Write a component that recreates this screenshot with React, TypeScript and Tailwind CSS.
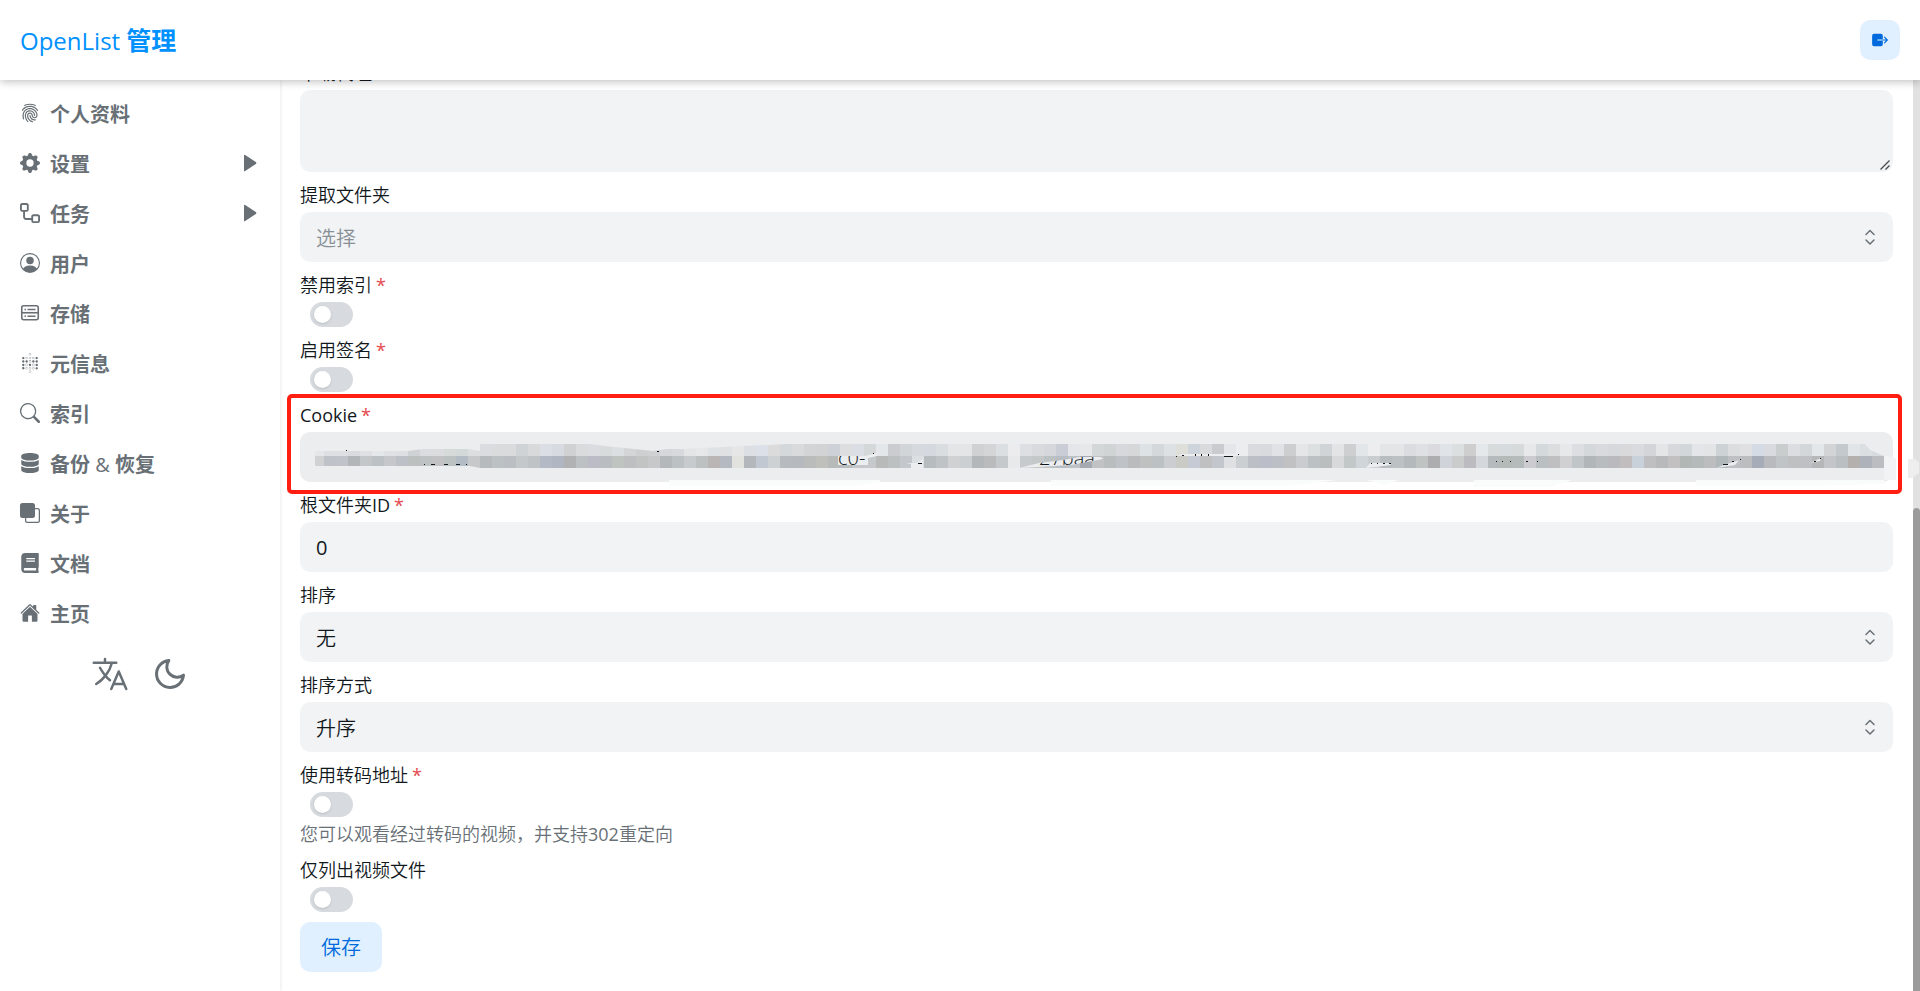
import React from 'react';
import type { IconType } from 'react-icons';
import { BsGearFill, BsPersonCircle, BsSearch, BsFront } from 'react-icons/bs';
import { FaDatabase, FaBook } from 'react-icons/fa';
import { FiMoon } from 'react-icons/fi';
import { IoExit, IoFingerPrint, IoHome, IoLanguageOutline } from 'react-icons/io5';
import { SiMetabase } from 'react-icons/si';

type IconProps = { className?: string };
type MenuItem = { title: string; icon: IconType | React.FC<IconProps>; children?: boolean };

function Workflow({ className }: IconProps) {
  return (
    <svg className={className} viewBox="0 0 16 16" fill="currentColor">
      <path d="M0 1.750C0 .784.784 0 1.750 0h3.500C6.216 0 7 .784 7 1.750v3.500A1.750 1.750 0 0 1 5.250 7H4v4a1 1 0 0 0 1 1h4v-1.250C9 9.784 9.784 9 10.750 9h3.500c.966 0 1.750.784 1.750 1.750v3.500A1.750 1.750 0 0 1 14.250 16h-3.500A1.750 1.750 0 0 1 9 14.250v-.750H5A2.500 2.500 0 0 1 2.500 11V7h-.750A1.750 1.750 0 0 1 0 5.250Zm1.750-.250a.250.250 0 0 0-.250.250v3.500c0 .138.112.250.250.250h3.500a.250.250 0 0 0 .250-.250v-3.500a.250.250 0 0 0-.250-.250Zm9 9a.250.250 0 0 0-.250.250v3.500c0 .138.112.250.250.250h3.500a.250.250 0 0 0 .250-.250v-3.500a.250.250 0 0 0-.250-.250Z" />
    </svg>
  );
}

function Storage({ className }: IconProps) {
  return (
    <svg className={className} viewBox="0 0 20 20" fill="none" stroke="currentColor" strokeWidth="1.600">
      <rect x="1.750" y="2.750" width="16.500" height="14" rx="2" />
      <path d="M2 9.750h16" />
      <path d="M4.500 6.500H6M7.500 6.500h8M4.500 13.300H6M7.500 13.300h8" strokeWidth="1.400" />
    </svg>
  );
}

const menu: MenuItem[] = [
  { title: '个人资料', icon: IoFingerPrint },
  { title: '设置', icon: BsGearFill, children: true },
  { title: '任务', icon: Workflow, children: true },
  { title: '用户', icon: BsPersonCircle },
  { title: '存储', icon: Storage },
  { title: '元信息', icon: SiMetabase },
  { title: '索引', icon: BsSearch },
  { title: '备份 & 恢复', icon: FaDatabase },
  { title: '关于', icon: BsFront },
  { title: '文档', icon: FaBook },
  { title: '主页', icon: IoHome },
];

// mask over the secret value, one colour per 12px cell
const maskTop =
  'e5e6e8 dedfe2 dedfe2 dadbde dfe0e3 e5e8eb dfe1e4 dddfe3 d0d3d5 dadcdf dadcde d6dad9 d3d8d8 dcdee0 dadcdf d9dbdd d9dbdd cfd3d5 d7d9da dcdee6 d7dae0 cfd1d3 d9dbdd dadce0 d8dbdc dbdfe1 d3d5d7 cdcfd1 d0d1d3 d5d7da d8d9dd ' +
  'e4e5e7 e6e7e9 dfe2e5 e0e1e3 e6e6e7 dcdfe4 dbe0e9 dcdbdc d5d8da d8dadb d2d4d6 d1d3d5 cfd1d8 dcdee0 dbdee4 d5d8d9 e4e7e9 cacccf d2d5d8 d6d9dd d5d9df dadde0 e4e5e7 e3e5e7 cfd1d3 d4d5d7 dcdfe2 ececee dddfe2 d8dadd d5d7dc cacdd5 e4e6e9 e6e8ea d3d7d8 d0d4d5 d6d8db d6d7d8 dde2e4 d5d8da ' +
  'dde1e3 dfdfda cdd4db d9dadc cacbce e5e6e9 ecedef dadbdf d9dade e0e2e6 cdced0 e4e6e8 dde0e1 d0d4d6 e2e4e6 cdcfd1 e2e6e9 ededef e3e5e7 e4e5e7 dadce0 dee0e4 dbdbdf e0e3e7 dcdfe0 cfcecf e5e8ea d7dbdc d6dbdd d6dadb e7e8ea d4d9dc dbdddf e7e8ea dcdee1 d5d8db d9dadd d6d8db d9d9dc dadbde ' +
  'd3d5d8 e4e5e7 d7d8db d2d7da e4e5e8 e3e4e6 cdd3d5 dcdddf e0e0e2 d5dbe4 d8dae0 cacdce dcdde1 d4d7da e4e7e9 d2d4d6 c3c9cc e1e5e7 dcdfe2 d7dade e8e9ea';
const maskBottom =
  'cfd1d3 bfc3c9 c0c3c9 b3b6b8 c4c7c9 bcc1c5 c6c7ca bdc0c7 bcc0bf bfc2c3 c2c2c4 bcc2c2 b3bbc4 c6c8ca b7babc bcc1c3 bbbfc3 c5c8ca bfc3c5 b4bac5 b0b6c2 b1b2b4 bdc1c3 bbbcc6 b9bdc1 c0c4c1 bdbfc1 c1c4c2 c6c8ca b5b8bb bcc1c3 ' +
  'c8cbcd bdc1c1 b9b6b5 b4b9c2 e2e2df b4b7bb c2c8d1 cdd1d4 b7babf b6b9be b9bcbb bfc0bb b6bab9 b9bdc0 c5c8ca c6c9cb b8bab9 bdc0c1 c4c7cb dcdfe2 b7bcbe bfc3c6 cfd1d3 cccfd1 b3b7b9 b9bbbc c6c9cb e8e9eb c6cacc c5c8c9 bcc1c3 b8bcc3 bdc2c6 a5a9b1 c0c2c3 babdbd bfc2c6 b9bbbc bec1c0 bcc1c3 ' +
  'cccdd1 cacbc5 c6cad4 c0c0c2 c4c6cd dfe0e2 cbcfd2 bcbfc6 bbbec8 bcbfc5 c1c0c3 cbcccf bcc1c3 babebe d7d9db c2c7c7 d0d5d9 c9cdd0 b8bdc0 bcc1c4 b4babc bfc3c1 adacae d0d4da c9cccb bcbbc0 d4d8dc b5babc b4bab7 b5babb ccccd0 bac0c1 bfbfc1 d0d0d2 c0c5c8 b1b7b9 b9bcbe b9b9be c1bdbf c8d0d9 ' +
  'bfbfc1 b8b9bb c2c0c1 b0b7b5 b4b9ba bbbdbf b1b8ba bfc0c3 bcbdbf a6adb8 b8babe c0c4c6 bfc0c2 bfc0c4 b6b7b8 c3c5c8 babfc1 b4b0ae aeb2bb bcbdc1 cbd1d3';

function Mosaic() {
  const rows = [maskTop.split(' '), maskBottom.split(' ')];
  return (
    <svg className="pointer-events-none absolute top-0 left-[15px] h-[56px] w-[1605px]" viewBox="0 0 1605 56" aria-hidden="true">
      <defs>
        <clipPath id="smudge">
          <path d="M0 19H93L108 17H153L165 19V12H275L290 14L338 19L352 17H368L472 12H1550L1555 18L1569 24V36H165L155 34H0Z" />
        </clipPath>
        <clipPath id="gapA"><path d="M523 24H553V33H523Z" /></clipPath>
        <clipPath id="gapB"><path d="M724 31L748 28L765 25H786L788 27L772 30L756 33H724Z" /></clipPath>
      </defs>
      <g clipPath="url(#smudge)" shapeRendering="crispEdges">
        {rows.map((row, r) =>
          row.map((c, i) => (
            <rect key={`${r}-${i}`} x={i === 0 ? 0 : i * 12 - 3} y={12 + r * 12} width={i === 0 ? 9 : 12} height={12} fill={`#${c}`} />
          ))
        )}
      </g>
      <g fill="#ecedef">
        <path d="M523 24H550L562 21V24L553 26V33H523Z" />
        <path d="M591 31H602L608 27V36H596V32Z" />
        <path d="M704 36L724 31L748 28L765 25H786L788 27L772 30L756 33Z" />
        <path d="M1401 36L1412 32L1425 28V27L1420 33Z" />
        <path d="M1495 31L1506 26L1505 29Z" />
        <path d="M862 24L868 22H921L928 22V24Z" />
        <path d="M1051 36L1055 31H1076V33L1060 35Z" />
      </g>
      <g fill="#11181c" fontSize="20">
        <text x="523" y="33" clipPath="url(#gapA)">c0-</text>
        <text x="724" y="33" clipPath="url(#gapB)">27baa</text>
      </g>
      <g fill="#11181c">
        <path d="M109 32h1v1h-1zM116 32h4v1h-4zM129 32h4v1h-4zM141 32h4v1h-4zM151 32h1v1h-1z" />
        <path d="M31 18h1v1h-1zM342 19h2v1h-2zM603 31h4v1h-4zM558 21h1v1h-1z" />
        <path d="M861 24h1v1h-1zM867 23h2v1h-2zM880 22h1v2h-1zM886 22h1v2h-1zM893 22h1v2h-1zM909 24h9v1h-9zM923 22h1v1h-1z" />
        <path d="M1056 31h1v1h-1zM1062 31h1v1h-1zM1068 31h2v1h-2zM1074 31h2v1h-2z" />
        <path d="M1181 29h1v1h-1zM1187 29h1v1h-1zM1195 29h1v1h-1zM1211 29h2v1h-2zM1222 29h1v1h-1z" />
        <path d="M1408 32h5v1h-5zM1417 29h2v1h-2zM1425 27h1v1h-1zM1499 29h2v1h-2zM1505 26h1v1h-1z" />
      </g>
      <path d="M1569 24L1581 26V48H1569Z" fill="#f1f3f4" />
      <path d="M354 48H565V50L540 54H354ZM736 48H1021L975 54H736ZM1052 48H1084L1070 53ZM1159 48H1257L1235 55H1159ZM1381 48H1569V52L1500 54H1381Z" fill="#fafcfb" />
      <path d="M1593 27H1600L1604 31V41L1597 46H1593Z" fill="#eeeeef" />
    </svg>
  );
}

function UpDown() {
  return (
    <svg className="pointer-events-none absolute top-4 right-[14px] size-[18px]" viewBox="0 0 18 18" fill="none" stroke="#687076" strokeWidth="1.500" strokeLinecap="round" strokeLinejoin="round">
      <path d="M5 6.500 9 2.500l4 4M5 12l4 4 4-4" />
    </svg>
  );
}

type FieldProps = { id: string; label: React.ReactNode; required?: boolean; help?: React.ReactNode; children: React.ReactNode };

function Field({ id, label, required, help, children }: FieldProps) {
  return (
    <div className="relative flex flex-col gap-1">
      <label htmlFor={id} className="text-[18px] leading-[26px]">
        {label}
        {required && <span className="ml-1 font-normal text-[#e5484d]">*</span>}
      </label>
      {children}
      {help && <p className="text-[18px] leading-[26px] text-[#687076]">{help}</p>}
    </div>
  );
}

function Switch({ id }: { id: string }) {
  return (
    <input
      id={id}
      type="checkbox"
      role="switch"
      className="ml-2.5 h-[25px] w-[43px] appearance-none rounded-full bg-[#d7dbdf] p-1 before:block before:size-[17px] before:rounded-full before:bg-white before:shadow-sm checked:bg-[#0090ff] checked:before:ml-[18px]"
    />
  );
}

function Select({ id, options, muted }: { id: string; options: string[]; muted?: boolean }) {
  return (
    <div className="relative">
      <select
        id={id}
        className={`block h-[50px] w-full appearance-none rounded-[10px] bg-[#f1f3f5] px-4 pt-1 text-xl ${muted ? 'text-[#889096]' : ''}`}
      >
        {options.map((o) => (
          <option key={o}>{o}</option>
        ))}
      </select>
      <UpDown />
    </div>
  );
}

function Header() {
  return (
    <header className="z-20 flex h-20 shrink-0 items-center justify-between bg-white px-5 shadow-[0_2px_8px_rgba(0,0,0,0.24)]">
      <a href="#" className="pt-0.5 text-2xl font-medium text-[#0091ff]">
        OpenList <span className="text-[25px] font-bold">管理</span>
      </a>
      <button aria-label="logout" className="flex size-10 items-center justify-center rounded-[10px] bg-[#e1f0ff] text-[#006adc]">
        <IoExit className="size-[18px]" />
      </button>
    </header>
  );
}

function Sidebar() {
  return (
    <aside className="z-10 w-[280px] shrink-0 bg-white px-5 pt-2 text-[#687076] shadow-[0_0_4px_rgba(0,0,0,0.12)]">
      <nav>
        {menu.map(({ title, icon: Icon, children }) => (
          <a key={title} href="#" className="flex h-[50px] items-center gap-2.5 text-xl font-bold">
            <Icon className="size-5" />
            <span className="grow pt-1">{title.includes('&') ? <>备份 <span className="font-normal">&amp;</span> 恢复</> : title}</span>
            {children && (
              <svg className="mr-[3px] h-[18px] w-[14px]" viewBox="0 0 14 18" fill="currentColor">
                <path d="M1 1.500Q1 .2 2.200.9L12.800 8Q14 9 12.800 10L2.200 17.100Q1 17.800 1 16.500Z" />
              </svg>
            )}
          </a>
        ))}
      </nav>
      <div className="mt-4 flex items-center justify-center gap-5">
        <button aria-label="language"><IoLanguageOutline className="size-10" /></button>
        <button aria-label="dark mode"><FiMoon className="size-10 p-0.5" /></button>
      </div>
    </aside>
  );
}

export default function App() {
  return (
    <div className="flex h-screen flex-col overflow-hidden bg-white font-['Open_Sans','Noto_Sans_CJK_SC',sans-serif] text-[#11181c]">
      <Header />
      <div className="flex min-h-0 grow">
        <Sidebar />
        <main className="flex min-w-0 grow flex-col justify-end px-5 pb-[19px] font-[350]">
          <form className="flex flex-col gap-2.5">
            <Field id="down_proxy_url" label="下载代理 URL">
              <div className="relative">
                <textarea id="down_proxy_url" className="block h-[82px] w-full resize-none rounded-[10px] bg-[#f1f3f5] px-4 py-2" />
                <svg className="pointer-events-none absolute right-[3px] bottom-0.5 size-[10px]" viewBox="0 0 10 10" stroke="#474a4d" strokeWidth="1.300">
                  <path d="M.5 9.500 9.500.5M5.500 9.500l4-4" />
                </svg>
              </div>
            </Field>
            <Field id="extract_folder" label="提取文件夹">
              <Select id="extract_folder" options={['选择']} muted />
            </Field>
            <Field id="disable_index" label="禁用索引" required>
              <Switch id="disable_index" />
            </Field>
            <Field id="enable_sign" label="启用签名" required>
              <Switch id="enable_sign" />
            </Field>
            <div className="relative">
              <Field id="cookie" label={<span className="font-medium">Cookie</span>} required>
                <div className="relative">
                  <input id="cookie" type="text" className="block h-[50px] w-full rounded-[10px] bg-[#ecedef] px-4 text-xl" />
                  <Mosaic />
                </div>
              </Field>
              <div className="pointer-events-none absolute -top-2 -right-[9px] -bottom-3 -left-[13px] rounded-[5px] border-4 border-[#ff1e10]" />
            </div>
            <Field id="root_folder_id" label={<>根文件夹<span className="font-medium">ID</span></>} required>
              <input id="root_folder_id" type="text" defaultValue="0" className="h-[50px] w-full rounded-[10px] bg-[#f1f3f5] px-4 text-xl font-normal" />
            </Field>
            <Field id="order_by" label="排序">
              <Select id="order_by" options={['无']} />
            </Field>
            <Field id="order_direction" label="排序方式">
              <Select id="order_direction" options={['升序']} />
            </Field>
            <Field
              id="transcoding"
              label="使用转码地址"
              required
              help={<>您可以观看经过转码的视频，并支持<span className="font-normal">302</span>重定向</>}
            >
              <Switch id="transcoding" />
            </Field>
            <Field id="only_video" label="仅列出视频文件">
              <Switch id="only_video" />
            </Field>
            <button type="button" className="h-[50px] self-start rounded-[10px] bg-[#e1f0ff] px-[21px] pt-0.5 text-xl text-[#006adc]">
              保存
            </button>
          </form>
        </main>
        <div className="flex w-[7px] shrink-0 flex-col justify-end bg-[#e1e1e1]">
          <div className="h-[53%] rounded-t-sm bg-[#9b9b9b]" />
        </div>
      </div>
    </div>
  );
}
